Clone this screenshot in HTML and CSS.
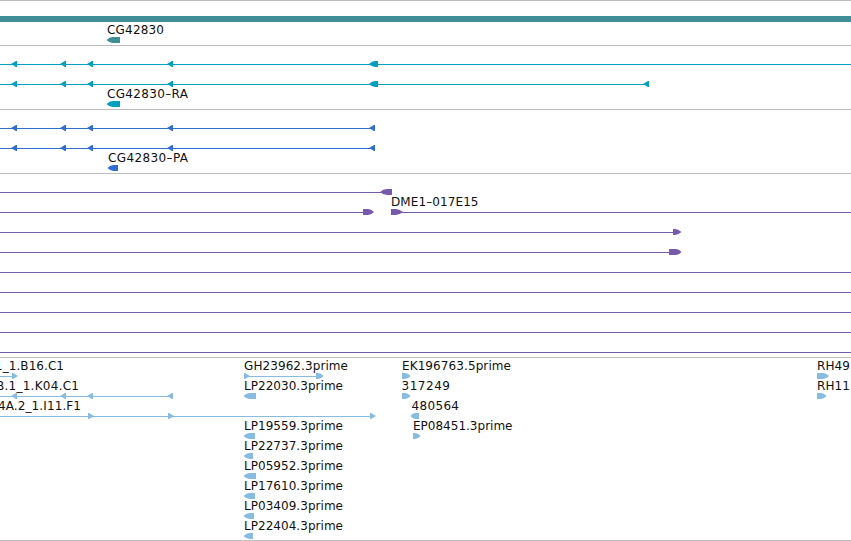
FILE: index.html
```html
<!DOCTYPE html>
<html lang="en">
<head>
  <meta charset="UTF-8">
  <title>CG42830</title>
  <link rel="stylesheet" href="styles.css">
</head>
<body>
  <main class="browser">

    <!-- Gene -->
    <svg class="track gene" viewBox="0 0 851 45">
      <path d="M0 16H851V22H0z"/>
      <text x="107" y="34" textLength="57">CG42830</text>
      <path d="M106.500 40q3-3 6-3h7.500v6h-7.500q-3 0-6-3z"/>
    </svg>

    <!-- Transcripts -->
    <svg class="track transcript" viewBox="0 45 851 64">
      <path d="M0 64H851v1H0zM0 84H645v1H0z"/>
      <path d="M11 64l5-3h1v6h-1zM60 64l5-3h1v6h-1zM87 64l5-3h1v6h-1zM167 64l5-3h1v6h-1zM369 64q3-3 6-3h3v6h-3q-3 0-6-3z"/>
      <path d="M11 84l5-3h1v6h-1zM60 84l5-3h1v6h-1zM87 84l5-3h1v6h-1zM167 84l5-3h1v6h-1zM369 84q3-3 6-3h3v6h-3q-3 0-6-3zM643 84l5-3h1v6h-1z"/>
      <text x="107" y="98" textLength="81">CG42830–RA</text>
      <path d="M106.500 104q3-3 6-3h7.500v6h-7.500q-3 0-6-3z"/>
    </svg>

    <!-- Proteins -->
    <svg class="track protein" viewBox="0 109 851 64">
      <path d="M0 128H372v1H0zM0 148H372v1H0z"/>
      <path d="M11 128l5-3h1v6h-1zM60 128l5-3h1v6h-1zM87 128l5-3h1v6h-1zM167 128l5-3h1v6h-1zM369 128l5-3h1v6h-1z"/>
      <path d="M11 148l5-3h1v6h-1zM60 148l5-3h1v6h-1zM87 148l5-3h1v6h-1zM167 148l5-3h1v6h-1zM369 148l5-3h1v6h-1z"/>
      <text x="108" y="162" textLength="80">CG42830–PA</text>
      <path d="M107.500 168q3-3 6-3h4.500v6h-4.500q-3 0-6-3z"/>
    </svg>

    <!-- Clones -->
    <svg class="track clone" viewBox="0 173 851 184">
      <path d="M0 192H383v1H0zM0 212H364v1H0zM400 212H851v1H400zM0 232H674v1H0zM0 252H670v1H0zM0 272H851v1H0zM0 292H851v1H0zM0 312H851v1H0zM0 332H851v1H0zM0 352H851v1H0z"/>
      <path d="M380 192q3-3 7-3h5v6h-5q-4 0-7-3zM363 209h5q3 0 6 3-3 3-6 3h-5zM391 209h5q3 0 7 3-4 3-7 3h-5zM673 229h2q3 0 6.500 3-3.500 3-6.500 3h-2zM669 249h7q3 0 5.500 3-2.500 3-5.500 3h-7z"/>
      <text x="391" y="206" textLength="87.500">DME1–017E15</text>
    </svg>

    <!-- ESTs -->
    <svg class="track est" viewBox="0 357 851 183">
      <path d="M0 376H13v1H0zM0 396H170v1H0zM0 416H371v1H0zM246 376H318v1H246z"/>
      <path d="M12 373h1l5 3-5 3h-1z"/>
      <path d="M11 396l5-3h1v6h-1zM60 396l5-3h1v6h-1zM87 396l5-3h1v6h-1zM167 396l5-3h1v6h-1z"/>
      <path d="M88 413h1l5 3-5 3h-1zM168 413h1l5 3-5 3h-1zM370 413h1l5 3-5 3h-1z"/>
      <text x="-5" y="370" textLength="69">1_1.B16.C1</text>
      <text x="-4" y="390" textLength="83">B.1_1.K04.C1</text>
      <text x="-2" y="410" textLength="83">4A.2_1.I11.F1</text>

      <path d="M244 373h1l5 3-5 3h-1zM316 373h2q3 0 5.500 3-2.500 3-5.500 3h-2z"/>
      <path d="M243.500 396q3-3 6-3h6.500v6h-6.500q-3 0-6-3zM243.500 436q3-3 6-3h5.500v6h-5.500q-3 0-6-3zM243.500 456q3-3 6-3h3.500v6h-3.500q-3 0-6-3zM243.500 476q3-3 6-3h6.500v6h-6.500q-3 0-6-3zM243.500 496q3-3 6-3h5.500v6h-5.500q-3 0-6-3zM243.500 516q3-3 6-3h4.500v6h-4.500q-3 0-6-3zM243.500 536q3-3 6-3h3.500v6h-3.500q-3 0-6-3z"/>
      <text x="244" y="370" textLength="104">GH23962.3prime</text>
      <text x="244" y="390" textLength="99">LP22030.3prime</text>
      <text x="244" y="430" textLength="99">LP19559.3prime</text>
      <text x="244" y="450" textLength="99">LP22737.3prime</text>
      <text x="244" y="470" textLength="99">LP05952.3prime</text>
      <text x="244" y="490" textLength="99">LP17610.3prime</text>
      <text x="244" y="510" textLength="99">LP03409.3prime</text>
      <text x="244" y="530" textLength="99">LP22404.3prime</text>

      <path d="M402 373h3q3 0 5.500 3-2.500 3-5.500 3h-3zM402 393h3q3 0 5.500 3-2.500 3-5.500 3h-3zM410.500 416q2-3 5-3h3.500v6h-3.500q-3 0-5-3zM413 433h2q3 0 5.500 3-2.500 3-5.500 3h-2z"/>
      <text x="402" y="370" textLength="109">EK196763.5prime</text>
      <text x="401.500" y="390" textLength="48.500">317249</text>
      <text x="411.500" y="410" textLength="47.500">480564</text>
      <text x="413" y="430" textLength="99.500">EP08451.3prime</text>

      <path d="M817 373h6q3 0 6 3-3 3-6 3h-6zM817 393h4q3 0 5.500 3-2.500 3-5.500 3h-4z"/>
      <text x="817" y="370" textLength="33">RH49</text>
      <text x="817" y="390" textLength="33">RH11</text>
    </svg>

  </main>
</body>
</html>
```
FILE: styles.css
```css
* {
  box-sizing: border-box;
  margin: 0;
  padding: 0;
}

body {
  background: #fff;
  overflow: hidden;
}

.browser {
  width: 851px;
  height: 541px;
  background: linear-gradient(#bebebe, #bebebe) left bottom / 100% 1px no-repeat;
}

.track {
  display: block;
  width: 851px;
  background: linear-gradient(#bebebe, #bebebe) left top / 100% 1px no-repeat;
}

.track text {
  font-family: "DejaVu Sans", sans-serif;
  font-size: 12px;
  fill: #111;
}

.gene {
  height: 45px;
  fill: #408f96;
}

.transcript {
  height: 64px;
  fill: #009fbf;
}

.protein {
  height: 64px;
  fill: #306fcf;
}

.clone {
  height: 184px;
  fill: #775aaa;
}

.est {
  height: 183px;
  fill: #87bbdf;
}
```
